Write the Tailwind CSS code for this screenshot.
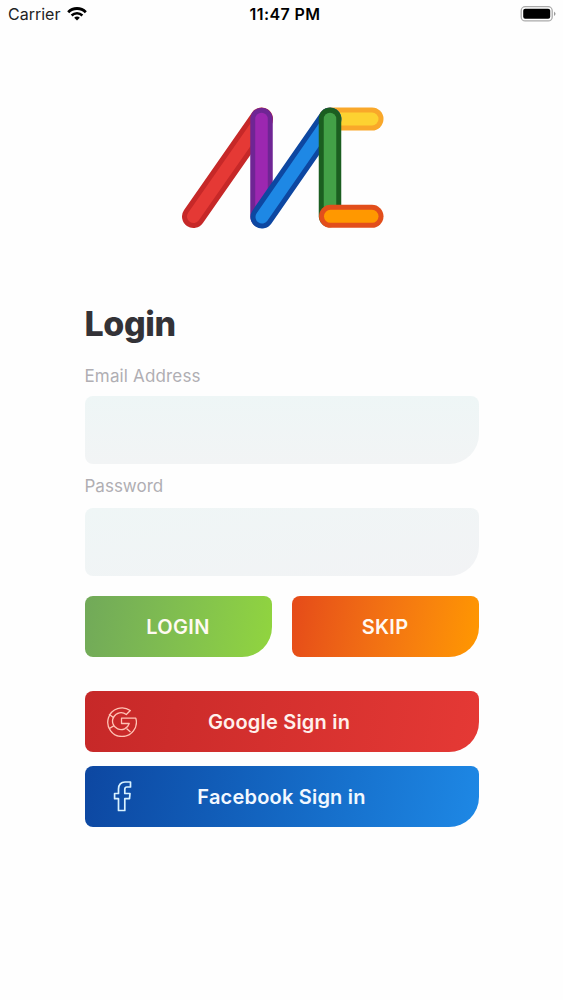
<!DOCTYPE html>
<html lang="en">
<head>
  <meta charset="UTF-8" />
  <meta name="viewport" content="width=device-width, initial-scale=1.0" />
  <title>Login</title>
  <script src="https://cdn.jsdelivr.net/npm/@tailwindcss/browser@4"></script>
</head>

<body class="bg-[#fefefe] h-[1000px] overflow-hidden font-['Inter',sans-serif]">

  <!-- Status Bar -->
  <header class="grid grid-cols-3 items-center h-[28px] pl-[8px] pr-[7px] text-black">
    <div class="flex items-center gap-[7px]">
      <span class="text-[16px] leading-5 text-[#222]">Carrier</span>
      <svg class="w-5 h-[14px]" viewBox="0 0 20 14">
        <path d="M1.200 5.200a12.300 12.300 0 0 1 17.600 0" fill="none" stroke="#000" stroke-width="2.800" />
        <path d="M4.600 8.500a7.800 7.800 0 0 1 10.800 0" fill="none" stroke="#000" stroke-width="2.500" />
        <path d="M10 13.600 7.200 10.800a3.900 3.900 0 0 1 5.600 0z" />
      </svg>
    </div>
    <span class="text-center text-[16px] leading-5 font-semibold tracking-[0.4px] whitespace-nowrap pl-[6px]">11:47 PM</span>
    <svg class="w-9 h-4 justify-self-end" viewBox="0 0 36 16">
      <rect x="1.200" y="0.700" width="31" height="14.200" rx="4" fill="#fff" stroke="#aaa" stroke-width="1.300" />
      <rect x="3.200" y="2.800" width="27" height="10" rx="2" />
      <path d="M34 5.500q3 2.300 0 4.600z" fill="#999" />
    </svg>
  </header>

  <main class="mx-auto w-[394px]">

    <!-- Logo -->
    <svg class="mx-auto mt-[72px] w-[214px] h-[136px]" viewBox="175 100 214 136" fill="none" stroke-linecap="round">
      <path d="M330 119H372" stroke="#f9a82a" stroke-width="23" />
      <path d="M330 119H372" stroke="#fdd231" stroke-width="13" />
      <path d="M193.500 216.500 261.500 119" stroke="#c62828" stroke-width="23" />
      <path d="M193.500 216.500 261.500 119" stroke="#e53935" stroke-width="13" />
      <path d="M261.500 119V216.500" stroke="#6f2594" stroke-width="22.500" />
      <path d="M261.500 119V216.500" stroke="#9c27b0" stroke-width="12.500" />
      <path d="M262 217 330 119" stroke="#0d47a1" stroke-width="23" />
      <path d="M262 217 330 119" stroke="#1e88e5" stroke-width="13" />
      <path d="M330 119V216" stroke="#1b5e20" stroke-width="22.500" />
      <path d="M330 119V216" stroke="#43a047" stroke-width="12.500" />
      <path d="M330.500 216.300H372" stroke="#e24e1b" stroke-width="23" />
      <path d="M330.500 216.300H372" stroke="#ff9800" stroke-width="13" />
    </svg>

    <h1 class="mt-[66px] text-[34px] leading-[44px] font-extrabold tracking-[-0.4px] text-[#333237]">Login</h1>

    <!-- Fields -->
    <label for="email" class="block mt-[19px] text-[17px] leading-[22px] tracking-[0.15px] text-[#b0aeb3]">Email Address</label>
    <input type="text" id="email" class="block mt-[9px] w-full h-[68px] px-4 rounded-lg rounded-br-[30px] bg-linear-to-b from-[#eef6f6] to-[#f2f4f5] outline-none" />
    <label for="password" class="block mt-[11px] text-[17px] leading-[22px] text-[#b0aeb3]">Password</label>
    <input type="password" id="password" class="block mt-[11px] w-full h-[68px] px-4 rounded-lg rounded-br-[30px] bg-linear-to-br from-[#eff6f6] to-[#f2f3f5] outline-none" />

    <!-- Actions -->
    <div class="grid grid-cols-2 gap-5 mt-5 text-xl font-semibold tracking-[0.3px] text-[#fffaf2]">
      <button class="h-[61px] rounded-lg rounded-br-[30px] bg-linear-100 from-[#71a959] to-[#91d53e]">LOGIN</button>
      <button class="h-[61px] rounded-lg rounded-br-[30px] bg-linear-100 from-[#e54a19] to-[#ff9800]">SKIP</button>
    </div>

    <button class="relative block mt-[34px] w-full h-[61px] pr-[5px] rounded-lg rounded-br-[30px] bg-linear-100 from-[#c62828] to-[#e53935] text-xl font-semibold tracking-[0.2px] text-[#fff0ec]">
      <svg class="absolute left-[20px] top-[14px] size-8" viewBox="0 0 32 32" fill="none" stroke="#ffc3b5" stroke-width="1.300" stroke-linejoin="round">
        <path d="M25.300 5.500A14.300 14.300 0 1 0 30.800 13.200H16.500V18.500H24.200A8.500 8.500 0 1 1 21.300 9.500Z" />
        <path d="M4 9.300 9 12.900M4 23.700 9 20.600M25.500 27 21.500 23.500" />
      </svg>
      Google Sign in
    </button>

    <button class="relative block mt-[14px] w-full h-[61px] rounded-lg rounded-br-[30px] bg-linear-100 from-[#0d47a1] to-[#1e88e5] text-xl font-semibold tracking-[0.2px] text-[#f2f8ff]">
      <svg class="absolute left-[20px] top-[14px] size-8" viewBox="0 0 32 32" fill="none" stroke="#d9f2ff" stroke-width="1.700" stroke-linejoin="round">
        <path d="M13.500 30.500V18.700H9.600V13.500H13.500V9C13.500 4.500 16 2 20 2H25.500V7H22C20.400 7 19.800 7.800 19.800 9.200V13.500H25L24.500 18.700H19.800V30.500Z" />
      </svg>
      Facebook Sign in
    </button>
  </main>

</body>
</html>
